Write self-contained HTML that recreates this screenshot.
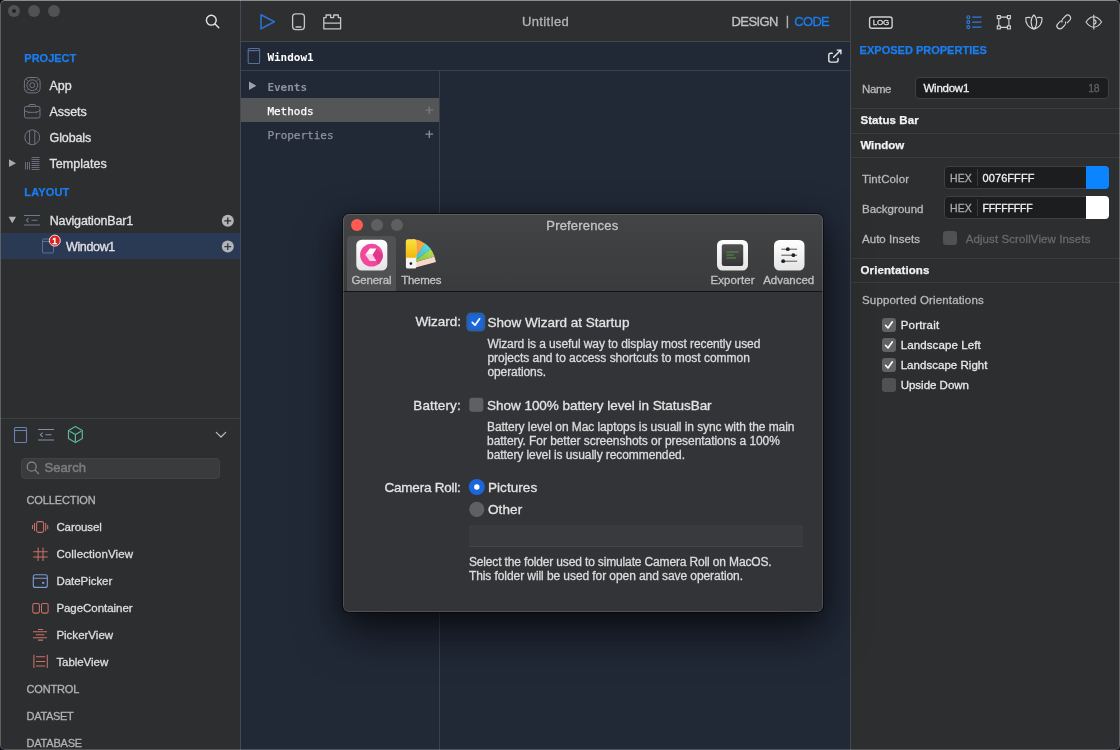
<!DOCTYPE html>
<html><head><meta charset="utf-8">
<style>
*{box-sizing:border-box;margin:0;padding:0}
html,body{width:1120px;height:750px;overflow:hidden;background:#0b0e1e;font-family:"Liberation Sans",sans-serif;color:#dcdcdc;font-size:13px}
.abs{position:absolute}
#win{position:absolute;left:0;top:0;width:1120px;height:750px;background:#212937;border-radius:5px;overflow:hidden}
#win:after{content:"";position:absolute;left:0;top:0;right:0;bottom:0;border-radius:5px;border:1px solid rgba(255,255,255,.24);border-top-color:rgba(255,255,255,.45);border-bottom-color:rgba(255,255,255,.2);pointer-events:none;z-index:50}
#side{position:absolute;left:0;top:0;width:240px;height:750px;background:#2c2e30}
#sdiv{position:absolute;left:240px;top:0;width:1px;height:750px;background:#424957}
#tbar{position:absolute;left:241px;top:0;width:610px;height:41px;background:#2e2f31}
#tbarl{position:absolute;left:241px;top:41px;width:610px;height:1px;background:#43464b}
#right{position:absolute;left:851px;top:0;width:269px;height:750px;background:#2c2e30}
#rdiv{position:absolute;left:850px;top:0;width:1px;height:750px;background:#44484e}
.t{position:absolute;white-space:nowrap;line-height:16px;height:16px}
.tl{position:absolute;width:12px;height:12px;border-radius:50%;background:#515254}
svg{position:absolute;overflow:visible;left:0;top:0}
.hl{position:absolute;left:851px;width:269px;height:1px;background:#3b3c3f}
.inp{position:absolute;background:#1c1d1f;border:1px solid #3f4043;border-radius:4px}
.cb{position:absolute;width:14px;height:14px;border-radius:3px;background:#616264}
</style></head><body>
<div id="win">
<div id="side"></div><div id="sdiv"></div>
<div id="tbar"></div><div id="tbarl"></div>
<div id="right"></div><div id="rdiv"></div>

<!-- main window traffic lights -->
<div class="tl" style="left:8px;top:5px"></div><div class="abs" style="left:12px;top:9px;width:4px;height:4px;border-radius:50%;background:#232325"></div>
<div class="tl" style="left:28px;top:5px"></div>
<div class="tl" style="left:48px;top:5px"></div>

<!-- sidebar shapes -->
<div class="abs" style="left:1px;top:233px;width:239px;height:26px;background:#2b3a54"></div>
<div class="abs" style="left:0;top:418px;width:240px;height:1px;background:#3d3e41"></div>
<div class="inp" style="left:21px;top:458px;width:199px;height:21px;background:#3a3b3d;border-color:#414244"></div>

<!-- center shapes -->
<div class="abs" style="left:241px;top:70px;width:609px;height:1px;background:#394050"></div>
<div class="abs" style="left:439px;top:71px;width:1px;height:679px;background:#384050"></div>
<div class="abs" style="left:241px;top:98px;width:198px;height:24px;background:#545557"></div>

<!-- right shapes -->
<div class="inp" style="left:915px;top:77px;width:194px;height:22px"></div>
<div class="hl" style="top:108px"></div>
<div class="hl" style="top:133px"></div>
<div class="hl" style="top:157px"></div>
<div class="inp" style="left:944px;top:166px;width:165px;height:23px"></div>
<div class="abs" style="left:977px;top:169px;width:1px;height:17px;background:#3a3b3d"></div>
<div class="abs" style="left:1086px;top:166px;width:23px;height:23px;background:#0a84ff;border-radius:0 4px 4px 0"></div>
<div class="inp" style="left:944px;top:196px;width:165px;height:23px"></div>
<div class="abs" style="left:977px;top:199px;width:1px;height:17px;background:#3a3b3d"></div>
<div class="abs" style="left:1086px;top:196px;width:23px;height:23px;background:#fff;border-radius:0 4px 4px 0"></div>
<div class="cb" style="left:943px;top:231px;background:#505153"></div>
<div class="hl" style="top:258px"></div>
<div class="hl" style="top:282px"></div>
<div class="cb" style="left:882px;top:318px"></div>
<div class="cb" style="left:882px;top:338px"></div>
<div class="cb" style="left:882px;top:358px"></div>
<div class="cb" style="left:882px;top:378px;background:#505153"></div>

<!-- ICONS (main window) -->
<svg width="1120" height="750" viewBox="0 0 1120 750" fill="none">
<!-- search -->
<g stroke="#e6e6e6" stroke-width="1.4" stroke-linecap="round"><circle cx="211.3" cy="20.2" r="4.9"/><path d="M215 23.9L218.8 27.7"/></g>
<!-- project icons -->
<g stroke="#777284" stroke-width="1">
<rect x="24.4" y="77.500" width="15.700" height="15.400" rx="4.500"/><circle cx="32.250" cy="85.200" r="5.400"/><circle cx="32.250" cy="85.200" r="2.500"/><path d="M26 79L28.500 81.500M38.500 79L36 81.500M26 91.400L28.500 88.900M38.500 91.400L36 88.900" stroke-width=".700"/>
<path d="M26.300 106.400h11.900a1.800 1.800 0 0 1 1.800 1.800v8a1.800 1.800 0 0 1-1.800 1.800h-11.900a1.800 1.800 0 0 1-1.800-1.800v-8a1.800 1.800 0 0 1 1.800-1.800zM28.800 106.400v-.600a1.300 1.300 0 0 1 1.300-1.300h4.300a1.300 1.300 0 0 1 1.300 1.300v.600M24.500 110.500c2 1.500 4.500 1.900 7.750 1.900s5.750-.400 7.750-1.900M28.300 112v1.300M36.200 112v1.300"/>
<circle cx="32.2" cy="137.3" r="7.4"/><path d="M29.6 130.4v13.8M34.8 130.4v13.8"/>
<path d="M25.5 162v7.5M27.5 162v7.5M29.5 162v7.5M31.5 157.5h8M31.5 159.5h8M31.5 161.5h8M31.5 163.5h8M31.5 165.5h8M31.5 167.5h8M31.5 169.5h8" stroke-width=".9"/>
</g>
<path d="M9 159.3L16 163.2L9 167.1z" fill="#a9a9aa"/>
<path d="M8.6 216.8H16L12.3 223.3z" fill="#b1b1b2"/>
<!-- nav icon -->
<g stroke="#6d7a91" stroke-width="1.1"><path d="M24 215.5h16M24 225h16M28.6 218.2L26.4 220.3L28.6 222.4M31.5 220.3h6"/></g>
<!-- plus circles -->
<circle cx="227.8" cy="220.8" r="6" fill="#b4b4b5"/><path d="M224.4 220.8h6.8M227.8 217.4v6.8" stroke="#2a2b2d" stroke-width="1.3"/>
<circle cx="227.8" cy="246.6" r="6" fill="#b4b4b5"/><path d="M224.4 246.6h6.8M227.8 243.2v6.8" stroke="#2b3a54" stroke-width="1.3"/>
<!-- window icon in tree -->
<g stroke="#5c7096" stroke-width="1"><rect x="42.5" y="239" width="11" height="14" rx="1"/><path d="M42.5 241.5h11"/></g>
<circle cx="54.800" cy="240.600" r="5.500" fill="#d9211f" stroke="#f8dede" stroke-width="1"/>
<!-- lower toolbar -->
<g stroke="#6b80ab" stroke-width="1.1"><rect x="14.5" y="427.5" width="12" height="15" rx="1"/><path d="M14.5 430.5h12"/></g>
<g stroke="#8490a9" stroke-width="1.1"><path d="M38 429.5h16M38 440h16M42.6 432.6L40.4 434.7L42.6 436.8M45.5 434.7h6"/></g>
<g stroke="#5cb79b" stroke-width="1.2" stroke-linejoin="round"><path d="M75.4 426.6L82.3 430.5V438.5L75.4 442.4L68.5 438.5V430.5zM69.6 431.2L75.4 434.6L81.2 431.2M75.4 434.6V441.5"/></g>
<path d="M216.300 432.300L221 437L225.700 432.300" stroke="#bdbdbe" stroke-width="1.200" stroke-linecap="round" stroke-linejoin="round"/>
<g stroke="#88898b" stroke-width="1.2" stroke-linecap="round"><circle cx="31.7" cy="466.7" r="4.5"/><path d="M35.1 470.1L38.6 473.6"/></g>
<!-- collection icons -->
<g stroke="#cb7067" stroke-width="1.050">
<rect x="36.6" y="521.6" width="7" height="10.8" rx="1.8"/><path d="M34.5 523v8M45.7 523v8M32.5 525v4M47.7 525v4"/>
<path d="M38.1 547.5v13.4M43 547.5v13.4M33.2 551.7h14.5M33.2 557h14.5"/>
<rect x="32.8" y="603.5" width="6.6" height="9.6" rx="1.6"/><rect x="41.5" y="603.5" width="6.6" height="9.6" rx="1.6"/>
<path d="M38 629.400h5M33 631.700h14M36 634.800h8.300M33 637.800h14M38 640.100h5"/>
<path d="M33.9 654.7v13.4M47.3 654.7v13.4M36 656.8h9.2M36 661.5h9.2M36 666h9.2"/>
</g>
<g stroke="#7b9cd2" stroke-width="1.1"><rect x="33.3" y="574.8" width="14" height="12.6" rx="2"/><path d="M33.3 578.3h14"/><circle cx="43.2" cy="582.9" r=".6" fill="#7b9cd2"/></g>
<!-- center toolbar -->
<path d="M261 14.8L274.4 21.8L261 28.8z" stroke="#2b70d2" stroke-width="1.6" stroke-linejoin="round"/>
<g stroke="#c6c6c7" stroke-width="1.3"><rect x="292.6" y="13.8" width="11.8" height="15.8" rx="3"/><path d="M296 27h5" stroke-linecap="round"/></g>
<g stroke="#c6c6c7" stroke-width="1.3" stroke-linejoin="round"><path d="M323.8 17.6h2.3v-2.6h4.6v2.6h3v-2.6h4.6v2.6h2.3v11.2h-16.8zM323.8 23.2h16.8"/></g>
<!-- center header icon -->
<g stroke="#5a6f97" stroke-width="1.1"><rect x="248.2" y="48.5" width="11.4" height="15" rx="1"/><path d="M248.2 50.6h11.4"/></g>
<!-- expand icon -->
<g stroke="#e6e6e6" stroke-width="1.400" stroke-linecap="round" stroke-linejoin="round"><path d="M832.300 53.300h-1.700a1.800 1.800 0 0 0-1.800 1.800v5.200a1.800 1.800 0 0 0 1.800 1.800h5.600a1.800 1.800 0 0 0 1.800-1.800v-1.900M837.200 50.100h3.700v3.700M840.900 50.100l-7.300 7.100"/></g>
<path d="M249 81.6L256.4 85.8L249 90z" fill="#9da2ab"/>
<path d="M425.500 110.200h7.600M429.300 106.400v7.600" stroke="#77797e" stroke-width="1.300"/>
<path d="M425.500 134.200h7.600M429.300 130.400v7.600" stroke="#8a8f99" stroke-width="1.300"/>
<!-- right toolbar -->
<rect x="869.6" y="17" width="22.500" height="11.300" rx="2.300" stroke="#cfcfcf" stroke-width="1.400" fill="#202122"/>
<g stroke="#2f7ce0" stroke-width="1.1"><circle cx="968.3" cy="17.2" r="1.5"/><circle cx="968.3" cy="22.1" r="1.5"/><circle cx="968.3" cy="27.1" r="1.5"/><path d="M972.3 17.2h9.2M972.3 22.1h9.2M972.3 27.1h9.2" stroke-width="1.3"/></g>
<g stroke="#d6d6d6" stroke-width="1.1"><path d="M998.8 18.7v7.2M1008.9 18.7v7.2M1000.4 17.1h6.9M1000.4 27.4h6.9"/><rect x="997.3" y="15.6" width="3" height="3"/><rect x="1007.4" y="15.6" width="3" height="3"/><rect x="997.3" y="25.9" width="3" height="3"/><rect x="1007.4" y="25.9" width="3" height="3"/></g>
<g stroke="#d6d6d6" stroke-width="1.1" stroke-linejoin="round"><path d="M1033.9 14.9C1037.6 18.5 1037.6 25.5 1033.9 29.1C1030.2 25.5 1030.2 18.5 1033.9 14.9zM1030.6 17.6C1028.8 17.2 1027 17.3 1025.8 17.8C1025.3 23 1028.3 28.2 1033.9 29.1M1037.2 17.6C1039 17.2 1040.8 17.3 1042 17.8C1042.5 23 1039.5 28.2 1033.9 29.1"/></g>
<g stroke="#d6d6d6" stroke-width="1.100" fill="none" transform="rotate(-45 1063.8 22)"><path d="M1062.300 19H1058.300A3 3 0 0 0 1058.300 25H1062.300A3 3 0 0 0 1065.200 22.800M1065.300 25H1069.300A3 3 0 0 0 1069.300 19H1065.300A3 3 0 0 0 1062.400 21.200"/></g>
<g stroke="#d6d6d6" stroke-width="1.1" stroke-linejoin="round"><path d="M1086 22C1088.5 18.5 1091 16.8 1093.8 16.8C1096.6 16.8 1099.1 18.5 1101.6 22C1099.1 25.5 1096.6 27.2 1093.8 27.2C1091 27.2 1088.500 25.5 1086 22zM1093.800 14.700V29.400M1093.800 19.800A2.200 2.200 0 0 1 1093.800 24.200"/></g>
</svg>

<!-- DIALOG -->
<div class="abs" style="left:343px;top:214px;width:480px;height:398px;border-radius:6px;background:#333437;box-shadow:0 0 0 1px rgba(0,0,0,.5),0 20px 45px rgba(0,0,0,.6),0 4px 22px rgba(0,0,0,.35);overflow:hidden">
<div class="abs" style="left:0;top:0;width:480px;height:77px;background:linear-gradient(#434446,#3a3b3d)"></div>
<div class="abs" style="left:4px;top:22px;width:49px;height:55px;background:#505153;border-radius:4px 4px 0 0"></div>
<div class="abs" style="left:0;top:77px;width:480px;height:1px;background:#141415"></div>
<div class="abs" style="left:126px;top:311px;width:334px;height:22px;background:#393a3d;border-bottom:1px solid #444548"></div>
<div class="abs" style="left:0;top:0;right:0;bottom:0;border-radius:6px;border:1px solid rgba(255,255,255,.14)"></div>
</div>
<div class="tl" style="left:351px;top:219px;background:#ff5b51"></div>
<div class="tl" style="left:371px;top:219px;background:#5e5f61"></div>
<div class="tl" style="left:391px;top:219px;background:#5e5f61"></div>

<svg width="1120" height="750" viewBox="0 0 1120 750" fill="none">
<defs>
<linearGradient id="gw" x1="0" y1="0" x2="0" y2="1"><stop offset="0" stop-color="#ffffff"/><stop offset="1" stop-color="#e4e4e4"/></linearGradient>
<linearGradient id="gd" x1="0" y1="0" x2="0" y2="1"><stop offset="0" stop-color="#505150"/><stop offset="1" stop-color="#343534"/></linearGradient>
<linearGradient id="gy" x1="0" y1="0" x2="0" y2="1"><stop offset="0" stop-color="#fae03e"/><stop offset="1" stop-color="#f1b80d"/></linearGradient>
<linearGradient id="go" x1="0" y1="0" x2="1" y2="0"><stop offset="0" stop-color="#d9832a"/><stop offset=".5" stop-color="#f8a23c"/><stop offset="1" stop-color="#fbb04a"/></linearGradient>
<linearGradient id="gc" x1="0" y1="1" x2="1" y2="0"><stop offset="0" stop-color="#35b5bd"/><stop offset="1" stop-color="#5ddde0"/></linearGradient>
<linearGradient id="gg" x1="0" y1="1" x2="1" y2="0"><stop offset="0" stop-color="#7fb92f"/><stop offset="1" stop-color="#b5e25c"/></linearGradient>
<clipPath id="cpk"><circle cx="371.5" cy="255.1" r="11.4"/></clipPath>
</defs>
<!-- General -->
<rect x="356.3" y="239.7" width="31" height="30.8" rx="5.5" fill="url(#gw)"/>
<circle cx="371.5" cy="255.1" r="11.4" fill="#f0489c"/>
<path d="M376.4 248.400L386 258L380 268L376.400 261.100L372.600 254.750z" fill="#e0388b" clip-path="url(#cpk)"/>
<path d="M369.800 248.400H376.400L372.600 254.750H365.200z" fill="#ffffff"/><path d="M365.200 254.750H372.600L376.400 261.100H369.800z" fill="#fbcfe4"/>
<!-- Themes -->
<g>
<path d="M410.9 263.6L434.4 256.4L436 262L416.5 267.3L408 267z" fill="#f8d6cd"/>
<path d="M410.9 263.6L430.7 249.0A24.6 24.6 0 0 1 434.5 256.6z" fill="url(#gg)"/>
<path d="M410.9 263.6L424.8 243.3A24.6 24.6 0 0 1 430.8 249.1z" fill="url(#gc)"/>
<path d="M410.9 263.6L413.0 239.1A24.6 24.6 0 0 1 424.9 243.4z" fill="url(#go)"/>
<rect x="405.9" y="239.6" width="10.4" height="29" rx="1.9" fill="#f4f4f4"/>
<path d="M405.9 241.5A1.900 1.900 0 0 1 407.800 239.600H414.400A1.900 1.900 0 0 1 416.300 241.500V257.700H405.900z" fill="url(#gy)"/>
<circle cx="410.900" cy="263.600" r="1.300" fill="#1a1a1a"/>
</g>
<!-- Exporter -->
<rect x="717" y="240" width="31" height="30.500" rx="5.500" fill="url(#gw)"/>
<rect x="721.800" y="244.300" width="21.400" height="21.600" rx="2" fill="url(#gd)"/>
<path d="M726.500 252h11.800M726.500 255h7.200M726.500 258h9.400" stroke="#57944b" stroke-width="1.200"/>
<!-- Advanced -->
<rect x="774" y="240" width="30.500" height="30.500" rx="5.500" fill="url(#gw)"/>
<g stroke="#555" stroke-width="1"><path d="M781.300 249.200h15.800M781.300 255.200h15.800M781.300 261.200h15.800"/></g>
<circle cx="787.800" cy="249.200" r="1.900" fill="#222"/><circle cx="793.400" cy="255.200" r="1.900" fill="#222"/><circle cx="783.200" cy="261.200" r="1.900" fill="#222"/>
<!-- checkbox wizard -->
<rect x="466.300" y="312.600" width="19" height="19" rx="5" fill="#2a5fa6"/>
<rect x="468.800" y="315.100" width="14" height="14" rx="3" fill="#1b66dc"/>
<path d="M472.300 322.300L475 325.200L479.600 318.800" stroke="#fff" stroke-width="1.700" stroke-linecap="round" stroke-linejoin="round"/>
<!-- checkbox battery -->
<rect x="469.300" y="397.800" width="14" height="14" rx="3" fill="#5f6062"/>
<!-- radios -->
<circle cx="476.800" cy="487" r="8" fill="#1b66dc"/><circle cx="476.800" cy="487" r="2.700" fill="#fff"/>
<circle cx="476.800" cy="509.300" r="7.600" fill="#5f6062"/>
<!-- right panel check marks -->
<g stroke="#fff" stroke-width="1.600" stroke-linecap="round" stroke-linejoin="round"><path d="M885.500 325.300L888 328L892.400 321.800"/><path d="M885.500 345.300L888 348L892.400 341.800"/><path d="M885.500 365.300L888 368L892.400 361.800"/></g>
</svg>

<div id="tx" style="position:absolute;left:0;top:0;width:1120px;height:750px;will-change:transform">
<div class="t g" style="left:24.3px;top:50px;font-size:11px;color:#1a7df0;font-weight:bold;-webkit-text-stroke:0.25px;letter-spacing:0.005px;">PROJECT</div>
<div class="t g" style="left:49.6px;top:78px;font-size:12.5px;color:#e2e2e3;-webkit-text-stroke:0.3px;letter-spacing:-0.125px;">App</div>
<div class="t g" style="left:49.6px;top:104px;font-size:12.5px;color:#e2e2e3;-webkit-text-stroke:0.3px;letter-spacing:-0.083px;">Assets</div>
<div class="t g" style="left:49.6px;top:130px;font-size:12.5px;color:#e2e2e3;-webkit-text-stroke:0.3px;letter-spacing:-0.115px;">Globals</div>
<div class="t g" style="left:49.6px;top:156px;font-size:12.5px;color:#e2e2e3;-webkit-text-stroke:0.3px;letter-spacing:0.027px;">Templates</div>
<div class="t g" style="left:24.3px;top:184px;font-size:11px;color:#1a7df0;font-weight:bold;-webkit-text-stroke:0.25px;letter-spacing:0.156px;">LAYOUT</div>
<div class="t g" style="left:49.7px;top:213px;font-size:12.5px;color:#e2e2e3;-webkit-text-stroke:0.3px;letter-spacing:-0.144px;">NavigationBar1</div>
<div class="t g" style="left:66.0px;top:239px;font-size:12.5px;color:#e2e2e3;-webkit-text-stroke:0.3px;letter-spacing:-0.354px;">Window1</div>
<div class="t g" style="left:44.6px;top:460px;font-size:13px;color:#7b7c7e;-webkit-text-stroke:0.3px;letter-spacing:0.039px;-webkit-text-stroke:0.5px;">Search</div>
<div class="t g" style="left:26.5px;top:492px;font-size:11px;color:#b2b3b4;-webkit-text-stroke:0.3px;letter-spacing:-0.122px;">COLLECTION</div>
<div class="t g" style="left:56.4px;top:519px;font-size:11.5px;color:#dededf;-webkit-text-stroke:0.3px;letter-spacing:-0.076px;">Carousel</div>
<div class="t g" style="left:56.4px;top:546px;font-size:11.5px;color:#dededf;-webkit-text-stroke:0.3px;letter-spacing:0.114px;">CollectionView</div>
<div class="t g" style="left:56.4px;top:573px;font-size:11.5px;color:#dededf;-webkit-text-stroke:0.3px;letter-spacing:-0.039px;">DatePicker</div>
<div class="t g" style="left:56.4px;top:600px;font-size:11.5px;color:#dededf;-webkit-text-stroke:0.3px;letter-spacing:-0.045px;">PageContainer</div>
<div class="t g" style="left:56.4px;top:627px;font-size:11.5px;color:#dededf;-webkit-text-stroke:0.3px;letter-spacing:0.003px;">PickerView</div>
<div class="t g" style="left:56.4px;top:654px;font-size:11.5px;color:#dededf;-webkit-text-stroke:0.3px;letter-spacing:-0.052px;">TableView</div>
<div class="t g" style="left:26.6px;top:681px;font-size:11px;color:#b2b3b4;-webkit-text-stroke:0.3px;letter-spacing:-0.180px;">CONTROL</div>
<div class="t g" style="left:26.6px;top:708px;font-size:11px;color:#b2b3b4;-webkit-text-stroke:0.3px;letter-spacing:-0.335px;">DATASET</div>
<div class="t g" style="left:26.6px;top:735px;font-size:11px;color:#b2b3b4;-webkit-text-stroke:0.3px;letter-spacing:-0.223px;">DATABASE</div>
<div class="t g" style="left:521.9px;top:14px;font-size:13px;color:#b4b5b6;-webkit-text-stroke:0.3px;letter-spacing:0.403px;">Untitled</div>
<div class="t g" style="left:731.6px;top:14px;font-size:13px;color:#c3c4c5;-webkit-text-stroke:0.3px;letter-spacing:-0.609px;">DESIGN</div>
<div class="t g" style="left:785.8px;top:13px;font-size:13px;color:#b0b1b2;-webkit-text-stroke:0.3px;">|</div>
<div class="t g" style="left:794.3px;top:14px;font-size:13px;color:#1a7df0;-webkit-text-stroke:0.3px;letter-spacing:-0.688px;">CODE</div>
<div class="t g" style="left:267.4px;top:50px;font-size:11px;color:#ffffff;font-weight:bold;font-family:'DejaVu Sans Mono','Liberation Mono',monospace;letter-spacing:-0.010px;">Window1</div>
<div class="t g" style="left:267.4px;top:80px;font-size:11px;color:#8d929c;font-weight:bold;font-family:'DejaVu Sans Mono','Liberation Mono',monospace;letter-spacing:-0.010px;">Events</div>
<div class="t g" style="left:267.4px;top:104px;font-size:11px;color:#ffffff;-webkit-text-stroke:0.25px;font-family:'DejaVu Sans Mono','Liberation Mono',monospace;letter-spacing:-0.010px;">Methods</div>
<div class="t g" style="left:267.4px;top:128px;font-size:11px;color:#8d929c;-webkit-text-stroke:0.25px;font-family:'DejaVu Sans Mono','Liberation Mono',monospace;letter-spacing:-0.004px;">Properties</div>
<div class="t g" style="left:859.6px;top:42px;font-size:11px;color:#1a7df0;font-weight:bold;-webkit-text-stroke:0.25px;letter-spacing:0.008px;">EXPOSED PROPERTIES</div>
<div class="t g" style="left:862.0px;top:81px;font-size:11.5px;color:#b8b9ba;-webkit-text-stroke:0.3px;letter-spacing:-0.396px;">Name</div>
<div class="t g" style="left:923.5px;top:80px;font-size:11.5px;color:#f0f0f0;-webkit-text-stroke:0.3px;letter-spacing:-0.252px;">Window1</div>
<div class="t g" style="left:1088.2px;top:80px;font-size:10.5px;color:#5e5f61;-webkit-text-stroke:0.3px;letter-spacing:-0.387px;">18</div>
<div class="t g" style="left:860.4px;top:112px;font-size:11.5px;color:#f2f2f2;font-weight:bold;-webkit-text-stroke:0.25px;letter-spacing:0.085px;">Status Bar</div>
<div class="t g" style="left:860.4px;top:137px;font-size:11.5px;color:#f2f2f2;font-weight:bold;-webkit-text-stroke:0.25px;letter-spacing:-0.034px;">Window</div>
<div class="t g" style="left:862.0px;top:171px;font-size:11.5px;color:#b8b9ba;-webkit-text-stroke:0.3px;letter-spacing:0.096px;">TintColor</div>
<div class="t g" style="left:950.0px;top:170px;font-size:10.5px;color:#a9aaab;-webkit-text-stroke:0.3px;letter-spacing:0.053px;">HEX</div>
<div class="t g" style="left:982.6px;top:170px;font-size:11px;color:#f0f0f0;-webkit-text-stroke:0.3px;letter-spacing:0.063px;">0076FFFF</div>
<div class="t g" style="left:862.0px;top:201px;font-size:11.5px;color:#b8b9ba;-webkit-text-stroke:0.3px;letter-spacing:0.014px;">Background</div>
<div class="t g" style="left:950.0px;top:200px;font-size:10.5px;color:#a9aaab;-webkit-text-stroke:0.3px;letter-spacing:0.053px;">HEX</div>
<div class="t g" style="left:982.6px;top:200px;font-size:10.5px;color:#f0f0f0;-webkit-text-stroke:0.3px;letter-spacing:-0.173px;">FFFFFFFF</div>
<div class="t g" style="left:862.0px;top:231px;font-size:11.5px;color:#b8b9ba;-webkit-text-stroke:0.3px;letter-spacing:0.035px;">Auto Insets</div>
<div class="t g" style="left:965.7px;top:231px;font-size:11.5px;color:#68696b;-webkit-text-stroke:0.3px;letter-spacing:0.095px;">Adjust ScrollView Insets</div>
<div class="t g" style="left:860.5px;top:262px;font-size:11.5px;color:#f2f2f2;font-weight:bold;-webkit-text-stroke:0.25px;letter-spacing:0.106px;">Orientations</div>
<div class="t g" style="left:862.0px;top:292px;font-size:11.5px;color:#b8b9ba;-webkit-text-stroke:0.3px;letter-spacing:0.163px;">Supported Orientations</div>
<div class="t g" style="left:900.7px;top:317px;font-size:11.5px;color:#e8e8e8;-webkit-text-stroke:0.3px;letter-spacing:0.189px;">Portrait</div>
<div class="t g" style="left:900.7px;top:337px;font-size:11.5px;color:#e8e8e8;-webkit-text-stroke:0.3px;letter-spacing:0.111px;">Landscape Left</div>
<div class="t g" style="left:900.7px;top:357px;font-size:11.5px;color:#e8e8e8;-webkit-text-stroke:0.3px;letter-spacing:0.035px;">Landscape Right</div>
<div class="t g" style="left:900.7px;top:377px;font-size:11.5px;color:#e8e8e8;-webkit-text-stroke:0.3px;letter-spacing:-0.011px;">Upside Down</div>
<div class="t g" style="left:872.7px;top:15px;font-size:8px;color:#dedede;-webkit-text-stroke:0.3px;letter-spacing:-0.203px;">LOG</div>
<div class="t g" style="left:52.3px;top:233px;font-size:8.5px;color:#ffffff;-webkit-text-stroke:0.3px;-webkit-text-stroke:0.5px;">1</div>
<div class="t g" style="left:546.3px;top:218px;font-size:13px;color:#c4c4c5;-webkit-text-stroke:0.3px;letter-spacing:0.181px;">Preferences</div>
<div class="t g" style="left:351.5px;top:272px;font-size:11.5px;color:#c2c2c3;-webkit-text-stroke:0.3px;letter-spacing:-0.154px;">General</div>
<div class="t g" style="left:401.2px;top:272px;font-size:11.5px;color:#c2c2c3;-webkit-text-stroke:0.3px;letter-spacing:-0.249px;">Themes</div>
<div class="t g" style="left:710.5px;top:272px;font-size:11.5px;color:#c2c2c3;-webkit-text-stroke:0.3px;letter-spacing:0.076px;">Exporter</div>
<div class="t g" style="left:763.2px;top:272px;font-size:11.5px;color:#c2c2c3;-webkit-text-stroke:0.3px;letter-spacing:-0.022px;">Advanced</div>
<div class="t g" style="left:415.4px;top:314px;font-size:13.5px;color:#e4e4e4;-webkit-text-stroke:0.3px;letter-spacing:-0.028px;">Wizard:</div>
<div class="t g" style="left:487.4px;top:315px;font-size:13.5px;color:#e4e4e4;-webkit-text-stroke:0.3px;letter-spacing:0.009px;">Show Wizard at Startup</div>
<div class="t g" style="left:487.4px;top:336px;font-size:12px;color:#dcdcdc;-webkit-text-stroke:0.3px;letter-spacing:-0.089px;">Wizard is a useful way to display most recently used</div>
<div class="t g" style="left:487.4px;top:350px;font-size:12px;color:#dcdcdc;-webkit-text-stroke:0.3px;letter-spacing:-0.021px;">projects and to access shortcuts to most common</div>
<div class="t g" style="left:487.4px;top:364px;font-size:12px;color:#dcdcdc;-webkit-text-stroke:0.3px;letter-spacing:-0.08px;">operations.</div>
<div class="t g" style="left:413.3px;top:398px;font-size:13.5px;color:#e4e4e4;-webkit-text-stroke:0.3px;letter-spacing:0.124px;">Battery:</div>
<div class="t g" style="left:487.1px;top:398px;font-size:13.5px;color:#e4e4e4;-webkit-text-stroke:0.3px;letter-spacing:-0.039px;">Show 100% battery level in StatusBar</div>
<div class="t g" style="left:487.1px;top:419px;font-size:12px;color:#dcdcdc;-webkit-text-stroke:0.3px;letter-spacing:-0.081px;">Battery level on Mac laptops is usuall in sync with the main</div>
<div class="t g" style="left:487.1px;top:433px;font-size:12px;color:#dcdcdc;-webkit-text-stroke:0.3px;letter-spacing:-0.058px;">battery. For better screenshots or presentations a 100%</div>
<div class="t g" style="left:487.1px;top:447px;font-size:12px;color:#dcdcdc;-webkit-text-stroke:0.3px;letter-spacing:-0.08px;">battery level is usually recommended.</div>
<div class="t g" style="left:384.6px;top:480px;font-size:13.5px;color:#e4e4e4;-webkit-text-stroke:0.3px;letter-spacing:-0.244px;">Camera Roll:</div>
<div class="t g" style="left:488.0px;top:480px;font-size:13.5px;color:#e4e4e4;-webkit-text-stroke:0.3px;letter-spacing:0.060px;">Pictures</div>
<div class="t g" style="left:488.0px;top:502px;font-size:13.5px;color:#e4e4e4;-webkit-text-stroke:0.3px;letter-spacing:0.109px;">Other</div>
<div class="t g" style="left:468.9px;top:554px;font-size:12px;color:#dcdcdc;-webkit-text-stroke:0.3px;letter-spacing:-0.146px;">Select the folder used to simulate Camera Roll on MacOS.</div>
<div class="t g" style="left:468.9px;top:568px;font-size:12px;color:#dcdcdc;-webkit-text-stroke:0.3px;letter-spacing:-0.078px;">This folder will be used for open and save operation.</div>
</div>
</div>
</body></html>
